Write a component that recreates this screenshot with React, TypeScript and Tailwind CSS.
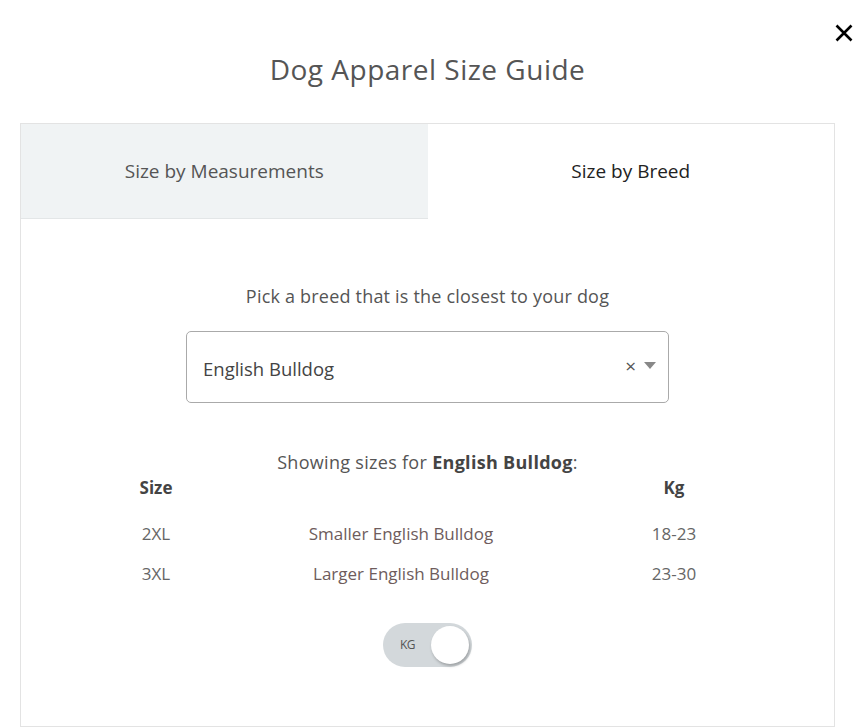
import React from "react";

const rows = [
  { size: "2XL", desc: "Smaller English Bulldog", kg: "18-23" },
  { size: "3XL", desc: "Larger English Bulldog", kg: "23-30" },
];

export default function App() {
  return (
    <div
      className="relative w-full h-[727px] bg-white overflow-hidden flex flex-col"
      style={{ fontFamily: '"Open Sans", "Noto Sans", sans-serif' }}
    >
      <button className="absolute right-[2px] top-[24px] w-[18px] h-[18px] flex items-center justify-center">
        <svg width="18" height="18" viewBox="0 0 18 18">
          <path d="M1.5 1.5 L16.5 16.5 M16.5 1.5 L1.5 16.5" stroke="#000" strokeWidth="2.6" />
        </svg>
      </button>

      <h1 className="pt-[49px] h-[123px] text-center text-[28px] leading-[40px] text-[#555] tracking-[0.5px]">
        Dog Apparel Size Guide
      </h1>

      <div className="mx-[20px] w-[815px] flex-1 border border-[#e3e3e3] flex flex-col">
        <div className="grid grid-cols-2 h-[95px]">
          <div className="bg-[#f0f3f4] border-b border-[#e3e6e7] flex items-center justify-center text-[19px] text-[#555]">
            Size by Measurements
          </div>
          <div className="bg-white flex items-center justify-center text-[19px] text-[#222]">
            Size by Breed
          </div>
        </div>

        <div className="flex flex-col items-center">
          <p className="mt-[64px] text-[18px] leading-[26px] text-[#555] tracking-[0.2px]">
            Pick a breed that is the closest to your dog
          </p>

          <div className="mt-[22px] w-[483px] h-[72px] rounded-[5px] border border-[#aaa] flex items-center pl-[16px] pr-[12px]">
            <span className="flex-1 mt-[3px] text-[18.5px] text-[#444]">English Bulldog</span>
            <span className="text-[#555] text-[19px] leading-none mr-[8px] mt-[-2px]">×</span>
            <svg width="12" height="8" viewBox="0 0 12 8" className="mt-[-2px]">
              <path d="M0 0 L12 0 L6 7 Z" fill="#888" />
            </svg>
          </div>

          <p className="mt-[47px] text-[18px] leading-[24px] text-[#555] tracking-[0.3px]">
            Showing sizes for <b className="font-bold text-[#444]">English Bulldog</b>:
          </p>

          <div className="w-full pl-[90px]">
            <div className="grid grid-cols-[90px_400px_146px] text-[17px] text-[#555]">
              <div className="text-center font-bold leading-[28px] text-[#444]">Size</div>
              <div></div>
              <div className="text-center font-bold leading-[28px] text-[#444]">Kg</div>
            </div>
            <div className="mt-[12px] flex flex-col">
              {rows.map((r) => (
                <div key={r.size} className="grid grid-cols-[90px_400px_146px] h-[40px] items-center text-[17px]">
                  <div className="text-center text-[#666]">{r.size}</div>
                  <div className="text-center text-[#6e5c5c]">{r.desc}</div>
                  <div className="text-center text-[#666]">{r.kg}</div>
                </div>
              ))}
            </div>
          </div>

          <div className="mt-[29px] w-[89px] h-[44px] rounded-full bg-[#d3d8db] relative flex items-center">
            <span className="ml-[17px] text-[12px] text-[#555] tracking-[-0.5px]">KG</span>
            <div className="absolute right-[3px] top-[3px] w-[38px] h-[38px] rounded-full bg-white shadow-[1px_2px_3px_rgba(0,0,0,0.25)]"></div>
          </div>
        </div>
      </div>
    </div>
  );
}
